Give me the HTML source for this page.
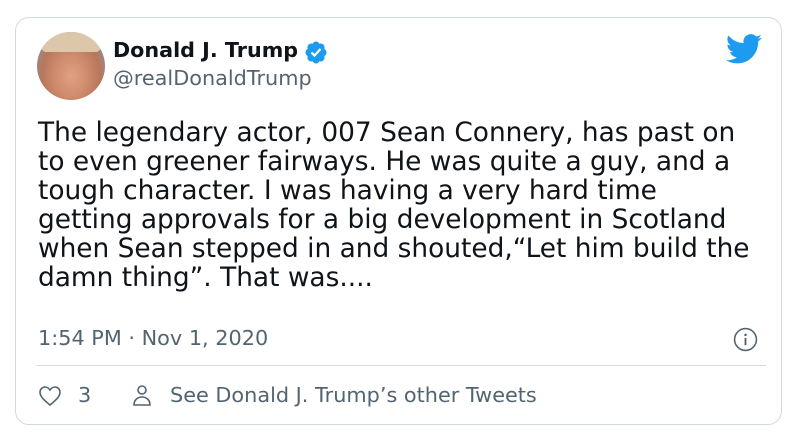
<!DOCTYPE html>
<html><head><style>
body{margin:0;width:800px;height:442px;background:#fff;font-family:"DejaVu Sans","Liberation Sans",sans-serif;overflow:hidden}
.card{position:absolute;left:15px;top:17px;width:767px;height:408px;border:1px solid #cfd9de;border-radius:14px;box-sizing:border-box}
.av{position:absolute;left:37px;top:32px;width:68px;height:68px;border-radius:50%;overflow:hidden;background:radial-gradient(ellipse at 50% 65%,#e0a284 0,#cf8a6c 35%,#b8775c 60%,#8c8f96 85%,#aab4bb 100%)}
.av:before{content:"";position:absolute;left:4px;top:0;width:60px;height:20px;border-radius:30px 30px 12px 12px;background:#dcc7ab}
.name{position:absolute;left:113px;top:38px;font-weight:bold;font-size:20.7px;color:#0f1419}
.ver{position:absolute;left:304px;top:40px}
.handle{position:absolute;left:113px;top:66px;font-size:20.8px;color:#536471}
.text{position:absolute;left:38px;top:118px;font-size:26.4px;line-height:29px;color:#0f1419;white-space:nowrap}
.time{position:absolute;left:38px;top:326px;font-size:20.8px;color:#536471}
.div{position:absolute;left:37px;top:365px;height:1px;background:#d4dbe0;width:729px}
.foot{position:absolute;top:383px;font-size:20.8px;color:#536471}
</style></head><body>
<div class="card"></div>
<div class="av"></div>
<div class="name">Donald J. Trump</div>
<svg class="ver" width="24" height="24" viewBox="0 0 24 24"><path fill="#1d9bf0" d="M22.5 12.5c0-1.58-.88-2.950-2.160-3.6.15-.44.23-.91.23-1.4 0-2.21-1.71-4-3.82-4-.47 0-.92.08-1.34.25C14.82 2.42 13.5 1.5 12 1.5s-2.82.92-3.410 2.25c-.42-.17-.87-.25-1.34-.25-2.11 0-3.82 1.79-3.82 4 0 .49.08.96.23 1.4C2.38 9.55 1.5 10.92 1.5 12.5s.88 2.95 2.16 3.6c-.15.44-.23.91-.23 1.4 0 2.21 1.71 4 3.82 4 .47 0 .92-.08 1.34-.25.59 1.33 1.91 2.25 3.41 2.25s2.82-.92 3.41-2.25c.42.17.87.25 1.34.25 2.11 0 3.82-1.79 3.82-4 0-.49-.08-.96-.23-1.4 1.28-.65 2.16-2.02 2.16-3.6z"/><path d="M7.5 12.5l3 3 6-6.5" stroke="#fff" stroke-width="2.2" fill="none"/></svg>
<div class="handle">@realDonaldTrump</div>
<svg style="position:absolute;left:726px;top:34px" width="37" height="30" viewBox="0 0 24 20"><path fill="#1d9bf0" d="M23.6 2.4c-.9.4-1.8.6-2.8.8 1-.6 1.8-1.6 2.1-2.7-1 .6-2 1-3.1 1.2C18.9.7 17.6.1 16.2.1c-2.7 0-4.9 2.2-4.9 4.9 0 .4 0 .8.1 1.1C7.3 5.9 3.7 4 1.3 1 .9 1.7.6 2.6.6 3.5c0 1.7.9 3.200 2.2 4.1-.8 0-1.6-.2-2.2-.6v.1c0 2.4 1.7 4.4 3.9 4.8-.4.1-.8.2-1.3.2-.3 0-.6 0-.9-.1.6 2 2.4 3.4 4.6 3.4-1.7 1.3-3.8 2.1-6.1 2.1-.4 0-.8 0-1.2-.1 2.2 1.4 4.8 2.2 7.5 2.2 9.1 0 14-7.5 14-14v-.6c1-.7 1.8-1.6 2.5-2.6z"/></svg>
<div class="text">The legendary actor, 007 Sean Connery, has past on<br>to even greener fairways. He was quite a guy, and a<br>tough character. I was having a very hard time<br>getting approvals for a big development in Scotland<br>when Sean stepped in and shouted,“Let him build the<br>damn thing”. That was....</div>
<div class="time">1:54 PM · Nov 1, 2020</div>
<svg style="position:absolute;left:733px;top:327px" width="25" height="25" viewBox="0 0 24 24"><circle cx="12" cy="12" r="10.5" fill="none" stroke="#536471" stroke-width="1.5"/><circle cx="12" cy="7.5" r="1.2" fill="#536471"/><path d="M12 10.5v7" stroke="#536471" stroke-width="1.8"/></svg>
<div class="div"></div>
<svg style="position:absolute;left:38px;top:385px" width="24" height="22" viewBox="0 0 24 22"><path d="M12 20C6 15 2 11.5 2 7.2 2 4.3 4.2 2 7 2c2 0 3.7 1.2 5 3 1.3-1.8 3-3 5-3 2.8 0 5 2.3 5 5.2 0 4.3-4 7.800-10 12.8z" fill="none" stroke="#536471" stroke-width="1.6"/></svg>
<div class="foot" style="left:78px">3</div>
<svg style="position:absolute;left:131px;top:384px" width="22" height="24" viewBox="0 0 22 24"><circle cx="11" cy="6" r="4" fill="none" stroke="#536471" stroke-width="1.6"/><path d="M3 21c0-5 3.5-8 8-8s8 3 8 8z" fill="none" stroke="#536471" stroke-width="1.6"/></svg>
<div class="foot" style="left:170px">See Donald J. Trump’s other Tweets</div>
</body></html>
